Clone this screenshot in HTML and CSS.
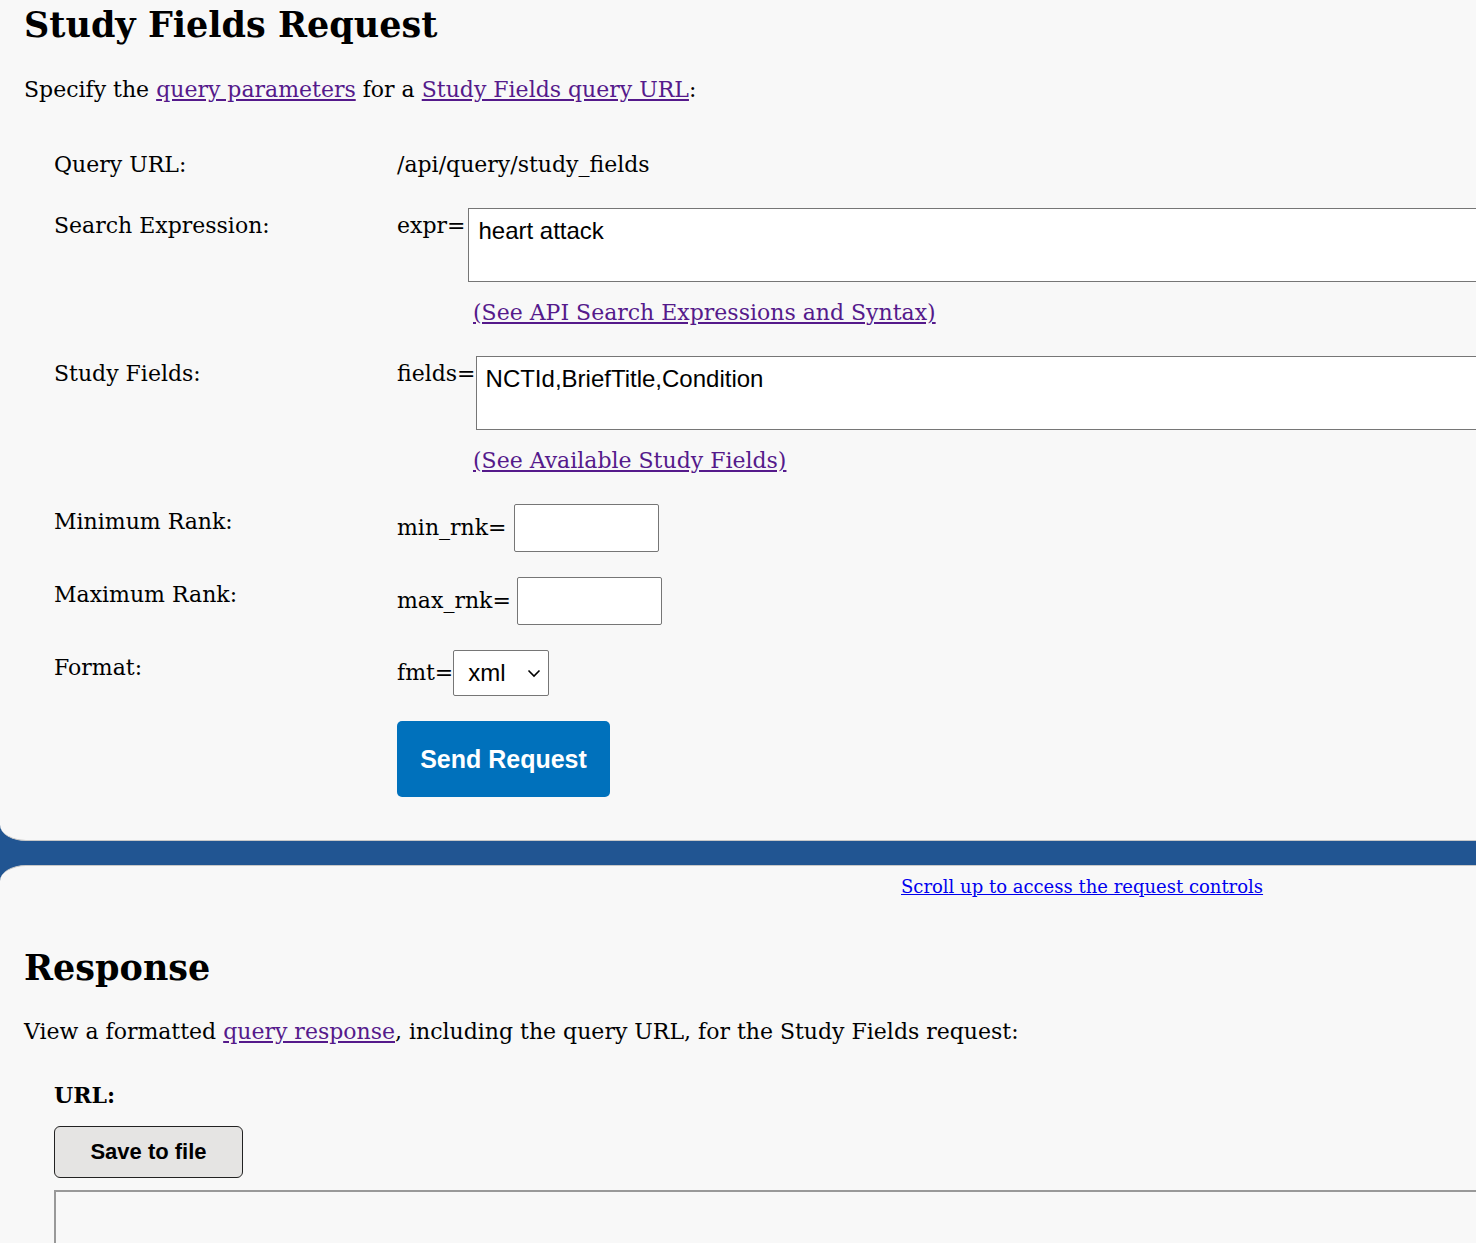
FILE: index.html
```html
<!DOCTYPE html>
<html lang="en">
<head>
<meta charset="utf-8">
<title>Study Fields Request</title>
<link rel="stylesheet" href="styles.css">
</head>
<body>
<div class="page">
  <section class="panel panel-top">
    <h1 class="title">Study Fields Request</h1>
    <p class="intro">Specify the <a class="visited" href="#">query parameters</a> for a <a class="visited" href="#">Study Fields query URL</a>:</p>

    <div class="form">
      <div class="label">Query URL:</div>
      <div class="value"><span class="text">/api/query/study_fields</span></div>

      <div class="label">Search Expression:</div>
      <div class="value">
        <div class="field-line">
          <span class="text">expr=</span>
          <textarea class="area area-expr" rows="2">heart attack</textarea>
        </div>
        <a class="visited help" href="#">(See API Search Expressions and Syntax)</a>
      </div>

      <div class="label">Study Fields:</div>
      <div class="value">
        <div class="field-line">
          <span class="text">fields=</span>
          <textarea class="area area-fields" rows="2">NCTId,BriefTitle,Condition</textarea>
        </div>
        <a class="visited help" href="#">(See Available Study Fields)</a>
      </div>

      <div class="label">Minimum Rank:</div>
      <div class="value inline">
        <span class="text">min_rnk=</span><input class="num num-min" type="text">
      </div>

      <div class="label">Maximum Rank:</div>
      <div class="value inline">
        <span class="text">max_rnk=</span><input class="num num-max" type="text">
      </div>

      <div class="label">Format:</div>
      <div class="value inline">
        <span class="text">fmt=</span>
        <span class="select">xml
          <svg class="chev" width="14" height="9" viewBox="0 0 14 9"><path d="M1.5 1.5 L7 7 L12.5 1.5" fill="none" stroke="#000" stroke-width="1.6"/></svg>
        </span>
      </div>

      <div class="label"></div>
      <div class="value"><button class="send" type="button">Send Request</button></div>
    </div>
  </section>

  <div class="bar"></div>

  <section class="panel panel-bottom">
    <div class="scroll-line"><a class="scroll" href="#">Scroll up to access the request controls</a></div>
    <h2 class="title2">Response</h2>
    <p class="intro intro2">View a formatted <a class="visited" href="#">query response</a>, including the query URL, for the Study Fields request:</p>
    <div class="url-block">
      <div class="url-label">URL:</div>
      <button class="save" type="button">Save to file</button>
      <div class="output"></div>
    </div>
  </section>
</div>
</body>
</html>
```

FILE: styles.css
```css
html, body {
  margin: 0;
  padding: 0;
  background: #f8f8f8;
  overflow: hidden;
}

body {
  font-family: "DejaVu Serif", "Liberation Serif", serif;
  color: #000;
  width: 1476px;
  height: 1243px;
}

.page {
  background: #215592;
  display: flex;
  flex-direction: column;
}

.panel {
  background: #f8f8f8;
  padding-left: 24px;
}

.panel-top {
  border-bottom: 1px solid #c8c8c8;
  border-bottom-left-radius: 26px 16px;
  padding-bottom: 43px;
}

.bar {
  height: 24px;
}

.panel-bottom {
  border-top: 1px solid #c8c8c8;
  border-top-left-radius: 26px 16px;
  height: 400px;
}

.title {
  margin: 0;
  font-size: 35px;
  line-height: 50px;
  font-weight: bold;
}

.intro {
  margin: 25px 0 0 0;
  font-size: 22px;
  line-height: 30px;
}

a.visited { color: #551a8b; }
a.scroll { color: #0000ee; }

.form {
  display: grid;
  grid-template-columns: 343px 1fr;
  row-gap: 25px;
  margin-top: 42px;
  padding-left: 30px;
  font-size: 22px;
}

.label {
  line-height: 36px;
}

.value {
  line-height: 36px;
}

.field-line {
  display: flex;
  align-items: flex-start;
}

.text {
  white-space: nowrap;
}

.area {
  box-sizing: border-box;
  height: 74px;
  width: 1200px;
  flex: none;
  border: 1px solid #767676;
  background: #fff;
  font-family: "Liberation Sans", Arial, sans-serif;
  font-size: 24px;
  line-height: 28px;
  padding: 8px 9px;
  margin: 0;
  resize: none;
  color: #000;
}

.area-expr { margin-left: 3px; }
.area-fields { margin-left: 0; }

.help {
  display: inline-block;
  margin-left: 76px;
  margin-top: 13px;
}

.inline {
  display: flex;
  align-items: center;
}

.num {
  box-sizing: border-box;
  width: 145px;
  height: 48px;
  border: 1px solid #767676;
  border-radius: 2px;
  background: #fff;
  margin: 0;
  padding: 0 8px;
  font-size: 22px;
}

.num-min { margin-left: 7px; }
.num-max { margin-left: 6px; }

.select {
  box-sizing: border-box;
  display: inline-flex;
  align-items: center;
  justify-content: space-between;
  width: 96px;
  height: 46px;
  border: 1px solid #767676;
  border-radius: 2px;
  background: #fff;
  padding: 0 7px 0 14px;
  font-family: "Liberation Sans", Arial, sans-serif;
  font-size: 24px;
  line-height: 28px;
}

.chev { display: block; }

.send {
  width: 213px;
  height: 76px;
  background: #0071bc;
  color: #fff;
  border: none;
  border-radius: 5px;
  font-family: "Liberation Sans", Arial, sans-serif;
  font-weight: bold;
  font-size: 25px;
  padding: 0;
  cursor: pointer;
}

.scroll-line {
  padding-left: 877px;
  margin-top: 6px;
  font-size: 18px;
  line-height: 30px;
}

.title2 {
  margin: 41px 0 0 0;
  font-size: 35px;
  line-height: 50px;
  font-weight: bold;
}

.intro2 {
  margin-top: 24px;
}

.url-block {
  padding-left: 30px;
  margin-top: 33px;
}

.url-label {
  font-size: 22px;
  font-weight: bold;
  line-height: 30px;
}

.save {
  display: block;
  margin-top: 16px;
  width: 189px;
  height: 52px;
  background: #e5e4e3;
  border: 1px solid #222;
  border-radius: 6px;
  font-family: "Liberation Sans", Arial, sans-serif;
  font-weight: bold;
  font-size: 22px;
  color: #000;
  padding: 0;
}

.output {
  margin-top: 12px;
  height: 200px;
  width: 1500px;
  border: 2px solid #999;
  border-right: none;
  background: #f8f8f8;
}
```
